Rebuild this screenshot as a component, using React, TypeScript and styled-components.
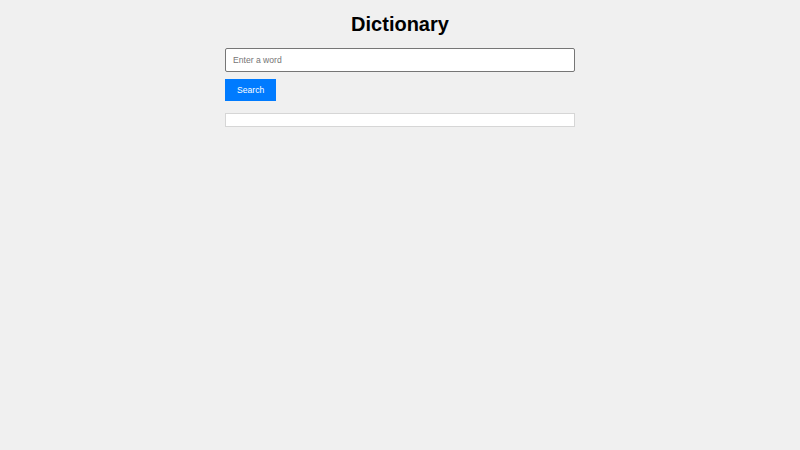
import * as React from 'react';
import styled, { createGlobalStyle } from 'styled-components';

const GlobalStyle = createGlobalStyle`
  html, body {
    margin: 0;
    padding: 0;
    background: #f0f0f0;
    font-family: "Liberation Sans", Arial, sans-serif;
  }
`;

const Page = styled.div`
  width: 350px;
  margin: 0 auto;
  padding-top: 12px;
`;

const Title = styled.h1`
  margin: 0;
  font-size: 20px;
  line-height: 24px;
  font-weight: 700;
  color: #000;
  text-align: center;
`;

const WordInput = styled.input`
  display: block;
  box-sizing: border-box;
  width: 100%;
  height: 24px;
  margin-top: 12px;
  padding: 0 7px;
  border: 1px solid #767676;
  border-radius: 2px;
  background: #fff;
  font-family: inherit;
  font-size: 8.6px;
  color: #000;
  outline: none;

  &::placeholder {
    color: #757575;
  }
`;

const SearchButton = styled.button`
  display: block;
  height: 22px;
  margin-top: 7px;
  padding: 0 12px;
  border: none;
  background: #007bff;
  color: #fff;
  font-family: inherit;
  font-size: 8.6px;
  cursor: pointer;
`;

const Result = styled.div`
  box-sizing: border-box;
  height: 14px;
  margin-top: 12px;
  background: #fff;
  border: 1px solid #d6d6d6;
`;

const App: React.FC = () => {
  const [word, setWord] = React.useState('');

  return (
    <>
      <GlobalStyle />
      <Page>
        <Title>Dictionary</Title>
        <WordInput
          type="text"
          placeholder="Enter a word"
          value={word}
          onChange={(e) => setWord(e.target.value)}
        />
        <SearchButton type="button">Search</SearchButton>
        <Result />
      </Page>
    </>
  );
};

export default App;
